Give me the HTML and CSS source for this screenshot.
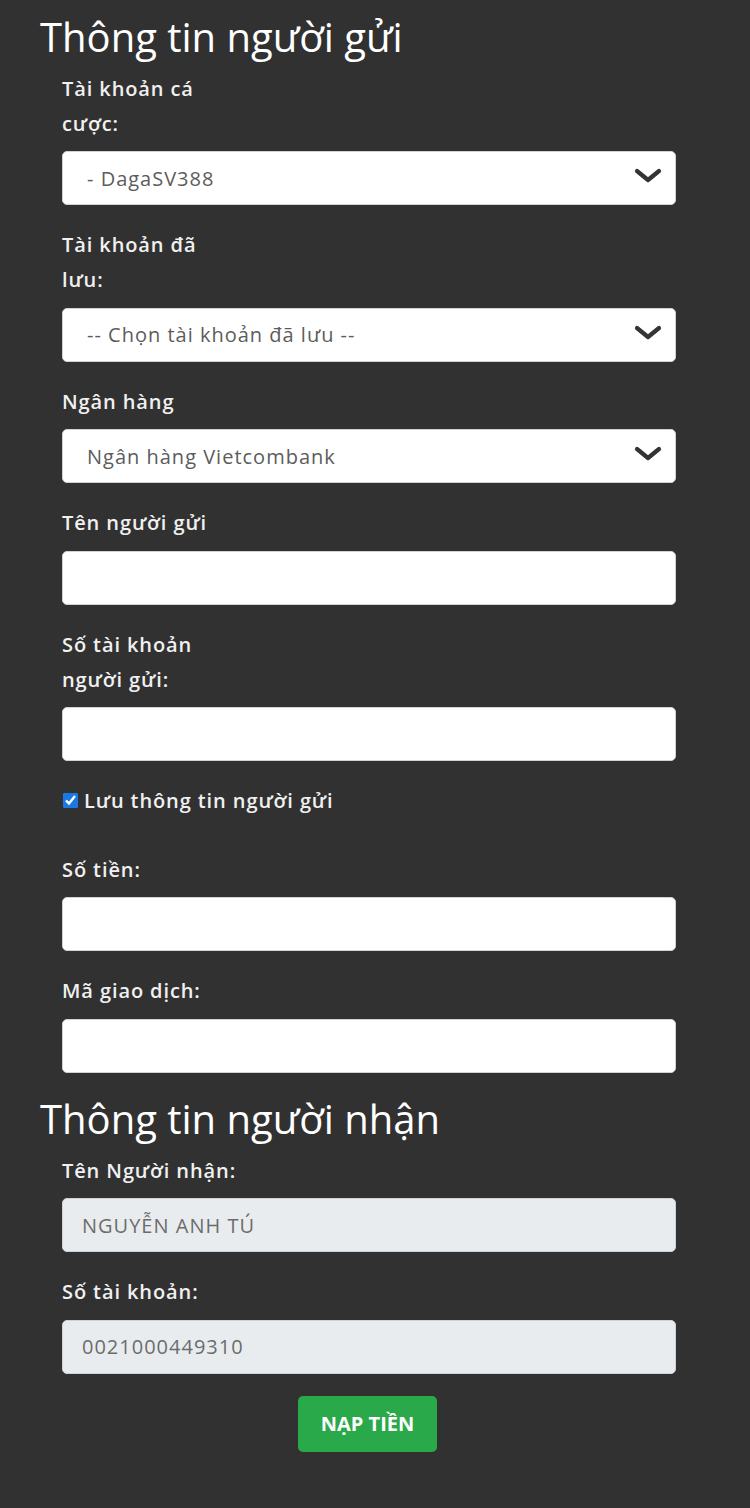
FILE: index.html
```html
<!DOCTYPE html>
<html lang="vi">
<head>
<meta charset="utf-8">
<title>Nạp tiền</title>
<link rel="stylesheet" href="styles.css">
</head>
<body>
<div class="page">
  <h2 class="section-title">Thông tin người gửi</h2>
  <div class="form">
    <div class="group">
      <label class="label">Tài khoản cá<br>cược:</label>
      <div class="select-wrap">
        <select class="control select"><option>- DagaSV388</option></select>
        <svg class="chevron" viewBox="0 0 28 18" width="28" height="18"><polyline points="3,4 14,13 25,4" fill="none" stroke="#343434" stroke-width="4.2" stroke-linecap="round" stroke-linejoin="round"/></svg>
      </div>
    </div>
    <div class="group">
      <label class="label">Tài khoản đã<br>lưu:</label>
      <div class="select-wrap">
        <select class="control select"><option>-- Chọn tài khoản đã lưu --</option></select>
        <svg class="chevron" viewBox="0 0 28 18" width="28" height="18"><polyline points="3,4 14,13 25,4" fill="none" stroke="#343434" stroke-width="4.2" stroke-linecap="round" stroke-linejoin="round"/></svg>
      </div>
    </div>
    <div class="group">
      <label class="label">Ngân hàng</label>
      <div class="select-wrap">
        <select class="control select"><option>Ngân hàng Vietcombank</option></select>
        <svg class="chevron" viewBox="0 0 28 18" width="28" height="18"><polyline points="3,4 14,13 25,4" fill="none" stroke="#343434" stroke-width="4.2" stroke-linecap="round" stroke-linejoin="round"/></svg>
      </div>
    </div>
    <div class="group">
      <label class="label">Tên người gửi</label>
      <input class="control" type="text">
    </div>
    <div class="group">
      <label class="label">Số tài khoản<br>người gửi:</label>
      <input class="control" type="text">
    </div>
    <div class="check-row">
      <input class="check" type="checkbox" checked>
      <span class="check-label">Lưu thông tin người gửi</span>
    </div>
    <div class="group">
      <label class="label">Số tiền:</label>
      <input class="control" type="text">
    </div>
    <div class="group">
      <label class="label">Mã giao dịch:</label>
      <input class="control" type="text">
    </div>
  </div>
  <h2 class="section-title">Thông tin người nhận</h2>
  <div class="form">
    <div class="group">
      <label class="label">Tên Người nhận:</label>
      <input class="control readonly" type="text" value="NGUYỄN ANH TÚ" readonly>
    </div>
    <div class="group">
      <label class="label">Số tài khoản:</label>
      <input class="control readonly" type="text" value="0021000449310" readonly>
    </div>
    <div class="actions">
      <button class="btn-submit" type="button">NẠP TIỀN</button>
    </div>
  </div>
</div>
</body>
</html>
```

FILE: styles.css
```css
html, body {
  margin: 0;
  padding: 0;
}

body {
  background: #313131;
  font-family: "Open Sans", "Noto Sans", "Liberation Sans", sans-serif;
  color: #f2f2f2;
  min-height: 1508px;
}

.page {
  padding: 12.5px 0 0 40px;
}

.section-title {
  margin: 0 0 10px;
  font-size: 40px;
  font-weight: 400;
  line-height: 48px;
  color: #ffffff;
}

.form {
  padding-left: 22px;
  width: 614px;
}

.group {
  margin-bottom: 22px;
}

.label {
  display: block;
  font-size: 20px;
  font-weight: 600;
  line-height: 35px;
  letter-spacing: 0.9px;
  color: #f0f0f0;
  margin-bottom: 10.5px;
}

.control {
  display: block;
  box-sizing: border-box;
  width: 614px;
  height: 54px;
  margin: 0;
  padding: 0 19px;
  border: 1px solid #cfd3d7;
  border-radius: 5px;
  background: #ffffff;
  font-family: "Open Sans", "Noto Sans", "Liberation Sans", sans-serif;
  font-size: 20px;
  letter-spacing: 1px;
  color: #5c5c5c;
  outline: none;
}

.select-wrap {
  position: relative;
}

.select {
  -webkit-appearance: none;
  appearance: none;
  padding-left: 24px;
  padding-right: 50px;
}

.chevron {
  position: absolute;
  right: 14px;
  top: 16px;
  pointer-events: none;
}

.readonly {
  background: #e9ecef;
  color: #6c6c6c;
}

.check-row {
  display: flex;
  align-items: center;
  height: 35px;
  margin-bottom: 33.5px;
}

.check {
  width: 15px;
  height: 15px;
  margin: 0 6px 0 1px;
  accent-color: #1a78e6;
}

.check-label {
  font-size: 20px;
  font-weight: 600;
  letter-spacing: 0.9px;
  color: #f0f0f0;
}

.actions {
  display: flex;
  justify-content: center;
}

.btn-submit {
  width: 139px;
  height: 56px;
  margin-left: -3px;
  border: none;
  border-radius: 5px;
  background: #2aa94a;
  color: #ffffff;
  font-family: "Open Sans", "Noto Sans", "Liberation Sans", sans-serif;
  font-size: 20px;
  font-weight: 700;
  letter-spacing: 0;
  cursor: pointer;
}
```
